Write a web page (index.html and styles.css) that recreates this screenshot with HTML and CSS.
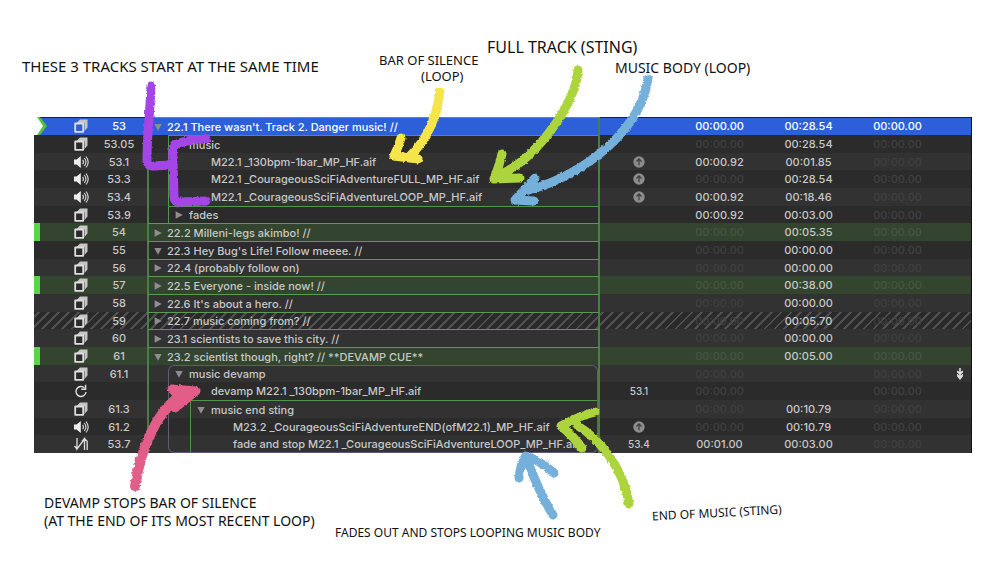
FILE: index.html
```
<!DOCTYPE html>
<html lang="en">
<head>
<meta charset="utf-8">
<title>Cue list</title>
<link rel="stylesheet" href="styles.css">
</head>
<body>
<svg class="defs" aria-hidden="true">
  <symbol id="group" viewBox="0 0 14 14"><path d="M3.500 3 6 .5h7.500v8L10.500 12V4.200H2.500z" fill="#c6c6c6"/><path d="M1.200 4.500h8v8.300h-8z" fill="currentColor" stroke="#dedede" stroke-width="1.800" stroke-linejoin="round"/></symbol>
  <symbol id="audio" viewBox="0 0 16 14"><path d="M1 4.500h2.600L7.800 1v12L3.600 9.500H1z" fill="#eee"/><path d="M9.600 4.800q1.800 2.200 0 4.400M11.300 3q3.300 4 0 8M13 1.500q4.400 5.500 0 11" fill="none" stroke="#ddd" stroke-width="1.100"/></symbol>
  <symbol id="loop" viewBox="0 0 14 14"><path d="M10.500 3.900A5 5 0 1 0 12 8" fill="none" stroke="#ddd" stroke-width="1.400"/><path d="M11.600.8v4.400H7.200" fill="none" stroke="#ddd" stroke-width="1.400"/></symbol>
  <symbol id="fade" viewBox="0 0 16 14"><path d="M4 1v11l7.500-10V13M1.500 9 4 12M9 4.500l2.500-3 2.800 3M14.200 4v9" fill="none" stroke="#ddd" stroke-width="1.300"/></symbol>
  <symbol id="up" viewBox="0 0 12 12"><circle cx="6" cy="6" r="5.700" fill="#8c8c8c"/><path d="M6 9.300V3M3.500 5.500 6 2.900l2.500 2.600" fill="none" stroke="#3c3c3c" stroke-width="1.200"/></symbol>
  <symbol id="open" viewBox="0 0 8 8"><path d="M.3 1h7.400L4 7.800z" fill="#8e8e8e"/></symbol>
  <symbol id="shut" viewBox="0 0 8 8"><path d="M.6.300v7.400L7.800 4z" fill="#8e8e8e"/></symbol>
  <symbol id="follow" viewBox="0 0 8 14"><path d="M4 1v11" stroke="#ddd" stroke-width="1.600"/><path d="M1 3.500 4 5l3-1.500v2L4 8 1 5.500zM1 6.800 4 9l3-2.200v2.400L4 13 1 9.200z" fill="#ddd"/></symbol>
</svg>

<main class="figure">
<table class="cues">
<colgroup><col class="c-state"><col class="c-type"><col class="c-num"><col><col class="c-target"><col class="c-time"><col class="c-time"><col class="c-time"><col class="c-cont"></colgroup>
<tbody>
<tr class="selected"><td class="state"><svg class="playhead" viewBox="0 0 14 18"><path d="M0 0h6l7 9-7 9H0z" fill="#52c43c"/><path d="M0 0h3l6 9-6 9H0z" fill="#fff"/></svg></td><td><svg class="type"><use href="#group"/></svg></td><td>53</td><td class="name top"><div class="cell"><button aria-label="Collapse"><svg><use href="#open"/></svg></button>22.1 There wasn't. Track 2. Danger music! //</div></td><td></td><td>00:00.00</td><td>00:28.54</td><td>00:00.00</td><td></td></tr>
<tr><td></td><td><svg class="type"><use href="#group"/></svg></td><td>53.05</td><td class="name"><div class="cell in"><div class="box first"><button aria-label="Collapse"><svg><use href="#open"/></svg></button>music</div></div></td><td></td><td class="dim">00:00.00</td><td>00:28.54</td><td class="dim">00:00.00</td><td></td></tr>
<tr><td></td><td><svg class="type"><use href="#audio"/></svg></td><td>53.1</td><td class="name"><div class="cell in"><div class="box leaf">M22.1 _130bpm-1bar_MP_HF.aif</div></div></td><td class="target"><svg class="up"><use href="#up"/></svg></td><td>00:00.92</td><td>00:01.85</td><td class="dim">00:00.00</td><td></td></tr>
<tr><td></td><td><svg class="type"><use href="#audio"/></svg></td><td>53.3</td><td class="name"><div class="cell in"><div class="box leaf">M22.1 _CourageousSciFiAdventureFULL_MP_HF.aif</div></div></td><td class="target"><svg class="up"><use href="#up"/></svg></td><td class="dim">00:00.00</td><td>00:28.54</td><td class="dim">00:00.00</td><td></td></tr>
<tr><td></td><td><svg class="type"><use href="#audio"/></svg></td><td>53.4</td><td class="name"><div class="cell in"><div class="box leaf">M22.1 _CourageousSciFiAdventureLOOP_MP_HF.aif</div></div></td><td class="target"><svg class="up"><use href="#up"/></svg></td><td>00:00.92</td><td>00:18.46</td><td class="dim">00:00.00</td><td></td></tr>
<tr><td></td><td><svg class="type"><use href="#group"/></svg></td><td>53.9</td><td class="name"><div class="cell in"><div class="box first"><button aria-label="Expand"><svg><use href="#shut"/></svg></button>fades</div></div></td><td></td><td>00:00.92</td><td>00:03.00</td><td class="dim">00:00.00</td><td></td></tr>
<tr class="green"><td></td><td><svg class="type"><use href="#group"/></svg></td><td>54</td><td class="name top"><div class="cell"><button aria-label="Expand"><svg><use href="#shut"/></svg></button>22.2 Milleni-legs akimbo! //</div></td><td></td><td class="dim">00:00.00</td><td>00:05.35</td><td class="dim">00:00.00</td><td></td></tr>
<tr><td></td><td><svg class="type"><use href="#group"/></svg></td><td>55</td><td class="name top"><div class="cell"><button aria-label="Collapse"><svg><use href="#open"/></svg></button>22.3 Hey Bug's Life! Follow meeee. //</div></td><td></td><td class="dim">00:00.00</td><td>00:00.00</td><td class="dim">00:00.00</td><td></td></tr>
<tr><td></td><td><svg class="type"><use href="#group"/></svg></td><td>56</td><td class="name top"><div class="cell"><button aria-label="Expand"><svg><use href="#shut"/></svg></button>22.4 (probably follow on)</div></td><td></td><td class="dim">00:00.00</td><td>00:00.00</td><td class="dim">00:00.00</td><td></td></tr>
<tr class="green"><td></td><td><svg class="type"><use href="#group"/></svg></td><td>57</td><td class="name top"><div class="cell"><button aria-label="Expand"><svg><use href="#shut"/></svg></button>22.5 Everyone - inside now! //</div></td><td></td><td class="dim">00:00.00</td><td>00:38.00</td><td class="dim">00:00.00</td><td></td></tr>
<tr><td></td><td><svg class="type"><use href="#group"/></svg></td><td>58</td><td class="name top"><div class="cell"><button aria-label="Expand"><svg><use href="#shut"/></svg></button>22.6 It's about a hero. //</div></td><td></td><td class="dim">00:00.00</td><td>00:00.00</td><td class="dim">00:00.00</td><td></td></tr>
<tr class="hatched"><td></td><td><svg class="type"><use href="#group"/></svg></td><td>59</td><td class="name top"><div class="cell"><button aria-label="Expand"><svg><use href="#shut"/></svg></button>22.7 music coming from? //</div></td><td></td><td class="dim">00:00.00</td><td>00:05.70</td><td class="dim">00:00.00</td><td></td></tr>
<tr><td></td><td><svg class="type"><use href="#group"/></svg></td><td>60</td><td class="name top"><div class="cell"><button aria-label="Expand"><svg><use href="#shut"/></svg></button>23.1 scientists to save this city. //</div></td><td></td><td class="dim">00:00.00</td><td>00:00.00</td><td class="dim">00:00.00</td><td></td></tr>
<tr class="green"><td></td><td><svg class="type"><use href="#group"/></svg></td><td>61</td><td class="name top"><div class="cell"><button aria-label="Collapse"><svg><use href="#open"/></svg></button>23.2 scientist though, right? // **DEVAMP CUE**</div></td><td></td><td class="dim">00:00.00</td><td>00:05.00</td><td class="dim">00:00.00</td><td></td></tr>
<tr><td></td><td><svg class="type"><use href="#group"/></svg></td><td>61.1</td><td class="name"><div class="cell in"><div class="box violet round"><button aria-label="Collapse"><svg><use href="#open"/></svg></button>music devamp</div></div></td><td></td><td class="dim">00:00.00</td><td></td><td class="dim">00:00.00</td><td class="cont"><svg class="follow"><use href="#follow"/></svg></td></tr>
<tr><td></td><td><svg class="type"><use href="#loop"/></svg></td><td></td><td class="name"><div class="cell in"><div class="box violet leaf">devamp M22.1 _130bpm-1bar_MP_HF.aif</div></div></td><td class="target">53.1</td><td class="dim">00:00.00</td><td></td><td class="dim">00:00.00</td><td></td></tr>
<tr><td></td><td><svg class="type"><use href="#group"/></svg></td><td>61.3</td><td class="name"><div class="cell in"><div class="box violet nest"><div class="box first"><button aria-label="Collapse"><svg><use href="#open"/></svg></button>music end sting</div></div></div></td><td></td><td class="dim">00:00.00</td><td>00:10.79</td><td class="dim">00:00.00</td><td></td></tr>
<tr><td></td><td><svg class="type"><use href="#audio"/></svg></td><td>61.2</td><td class="name"><div class="cell in"><div class="box violet nest"><div class="box leaf">M23.2 _CourageousSciFiAdventureEND(ofM22.1)_MP_HF.aif</div></div></div></td><td class="target"><svg class="up"><use href="#up"/></svg></td><td class="dim">00:00.00</td><td>00:10.79</td><td class="dim">00:00.00</td><td></td></tr>
<tr><td></td><td><svg class="type"><use href="#fade"/></svg></td><td>53.7</td><td class="name"><div class="cell in"><div class="box violet nest end"><div class="box leaf">fade and stop M22.1 _CourageousSciFiAdventureLOOP_MP_HF.aif</div></div></div></td><td class="target">53.4</td><td>00:01.00</td><td>00:03.00</td><td class="dim">00:00.00</td><td></td></tr>
</tbody>
</table>

<svg class="arrows" viewBox="0 0 1000 586" aria-hidden="true">
  <filter id="chalk" x="-5%" y="-5%" width="110%" height="110%" color-interpolation-filters="sRGB"><feTurbulence type="fractalNoise" baseFrequency=".35" numOctaves="2" seed="4"/><feDisplacementMap in="SourceGraphic" scale="3" xChannelSelector="R" yChannelSelector="G"/></filter>
  <g filter="url(#chalk)" fill="none" stroke-linecap="round" stroke-linejoin="round" stroke-width="9">
    <path stroke="#a445e8" d="M151 86C150 112 147 139 147 157Q146 167 154 166L170 165M206 139Q189 139 174 145Q172 148 173 160L174 196Q174 203 181 202L206 201"/>
    <path stroke="#f5e54a" d="M440 88Q437 130 409 157" stroke-linecap="butt"/>
    <path stroke="#f5e54a" d="M401 138Q398 148 394 156L418 159"/>
    <path stroke="#acd43c" d="M578 70C577 100 540 155 502 174M502 154Q499 167 494 179L520 178"/>
    <path stroke="#74b0da" d="M648 79C638 140 568 182 524 191M535 178 515 200 534 201"/>
    <path stroke="#e25d87" stroke-width="10" d="M135 486C141 448 157 410 183 394"/>
    <path stroke="#e25d87" fill="#e25d87" stroke-width="9" d="M172 389 196 391 175 408 179 397Z"/>
    <path stroke="#74b0da" d="M553 515Q540 494 528 462M519 478Q521 461 526 456Q539 460 554 473"/>
    <path stroke="#acd43c" d="M629 504C624 468 598 438 578 426M595 412Q579 416 561 426Q574 437 582 448"/>
  </g>
</svg>

<p class="note n1">These 3 tracks start at the same time</p>
<p class="note n2">Bar of silence</p>
<p class="note n3">(loop)</p>
<p class="note n4">Full track (sting)</p>
<p class="note n5">Music body (loop)</p>
<p class="note n6">Devamp stops bar of silence<br>(at the end of its most recent loop)</p>
<p class="note n7">Fades out and stops looping music body</p>
<p class="note n8">End of music (sting)</p>
</main>
</body>
</html>
```

FILE: styles.css
```
* { box-sizing: border-box; }
body { margin: 0; background: #fff; font-family: Inter, "Liberation Sans", sans-serif; }
.defs { position: absolute; width: 0; height: 0; }
.figure { position: relative; padding: 117px 28px 132px 34px; }

.cues { width: 100%; table-layout: fixed; border-collapse: separate; border-spacing: 0; background: #2b2b2b; color: #c8c8c8; font-size: 11px; font-weight: 500; line-height: 16px; border-right: 1px solid #111; }
.c-state { width: 37px; }
.c-type { width: 20px; }
.c-num { width: 56px; }
.c-target { width: 75px; }
.c-time { width: 89px; }
.c-cont { width: 29px; }
.cues tr { height: 18px; background: #2b2b2b; }
.cues tr:nth-child(odd) { background: #323232; }
.cues tr:nth-child(3n) { height: 17px; }
.cues td { height: inherit; padding: 0; text-align: center; vertical-align: middle; white-space: nowrap; }
.cues td svg { display: block; margin: 0 auto; }
.cues .dim { color: #404040; }
.cues .target { padding-left: 3px; font-size: 10px; }
.cues .cont { padding-left: 6px; }
.cues tr.green { background: #34452f; }
.cues tr.green .dim { color: #465542; }
.cues tr.green td:first-child { border-left: 6px solid #5bd34a; }
.cues tr.selected { background: #2d60d8; color: #fff; box-shadow: inset 0 1px #0c1c70; }
.cues tr.hatched { background: repeating-linear-gradient(-45deg, #2a2a2a 0 5px, #505050 5px 7px); }

.playhead { width: 14px; height: 18px; }
.cues .state .playhead { margin: 0; }
.type { width: 16px; height: 14px; color: #2b2b2b; }
.selected .type { color: #2d60d8; }
.cues td .type { margin: 0 2px; }
.up { width: 12px; height: 12px; }
.follow { width: 8px; height: 14px; }

.cues .name { text-align: left; }
.cell { display: flex; align-items: center; height: 100%; border: solid #487f43; border-width: 0 2px; overflow: hidden; }
.top .cell { border-top: 1px solid #5a9a54; }
.in { padding-left: 19px; }
.box { display: flex; flex: 1; align-items: center; align-self: stretch; border-left: 1px solid #52964c; }
.first { border-top: 1px solid #52964c; }
.leaf { padding-left: 42px; }
.violet { border-color: #5c5c7a; border-right: 1px solid #5c5c7a; }
.round { border-top: 1px solid #5c5c7a; border-radius: 6px 6px 0 0; }
.nest { padding-left: 21px; }
.end { border-bottom: 1px solid #5c5c7a; border-radius: 0 0 6px 6px; }
.cell button { width: 20px; padding: 0; border: 0; background: none; flex: none; }
.top .cell button { width: 18px; }
.cell button svg { width: 8px; height: 8px; }

.arrows { position: absolute; left: 0; top: 0; width: 1000px; height: 586px; pointer-events: none; }
.note { position: absolute; margin: 0; color: #111; font-family: "Noto Sans", sans-serif; font-size: 14px; line-height: 16px; text-transform: uppercase; white-space: nowrap; }
.n1 { left: 22px; top: 58px; font-size: 15px; }
.n2 { left: 379px; top: 53px; font-size: 13px; line-height: 14px; }
.n3 { left: 421px; top: 69px; font-size: 13px; line-height: 14px; }
.n4 { left: 487px; top: 39px; font-size: 16px; }
.n5 { left: 615px; top: 60px; }
.n6 { left: 44px; top: 494px; line-height: 18px; }
.n7 { left: 335px; top: 525px; font-size: 12px; }
.n8 { left: 652px; top: 505px; font-size: 12px; transform: rotate(-3deg); }
```
